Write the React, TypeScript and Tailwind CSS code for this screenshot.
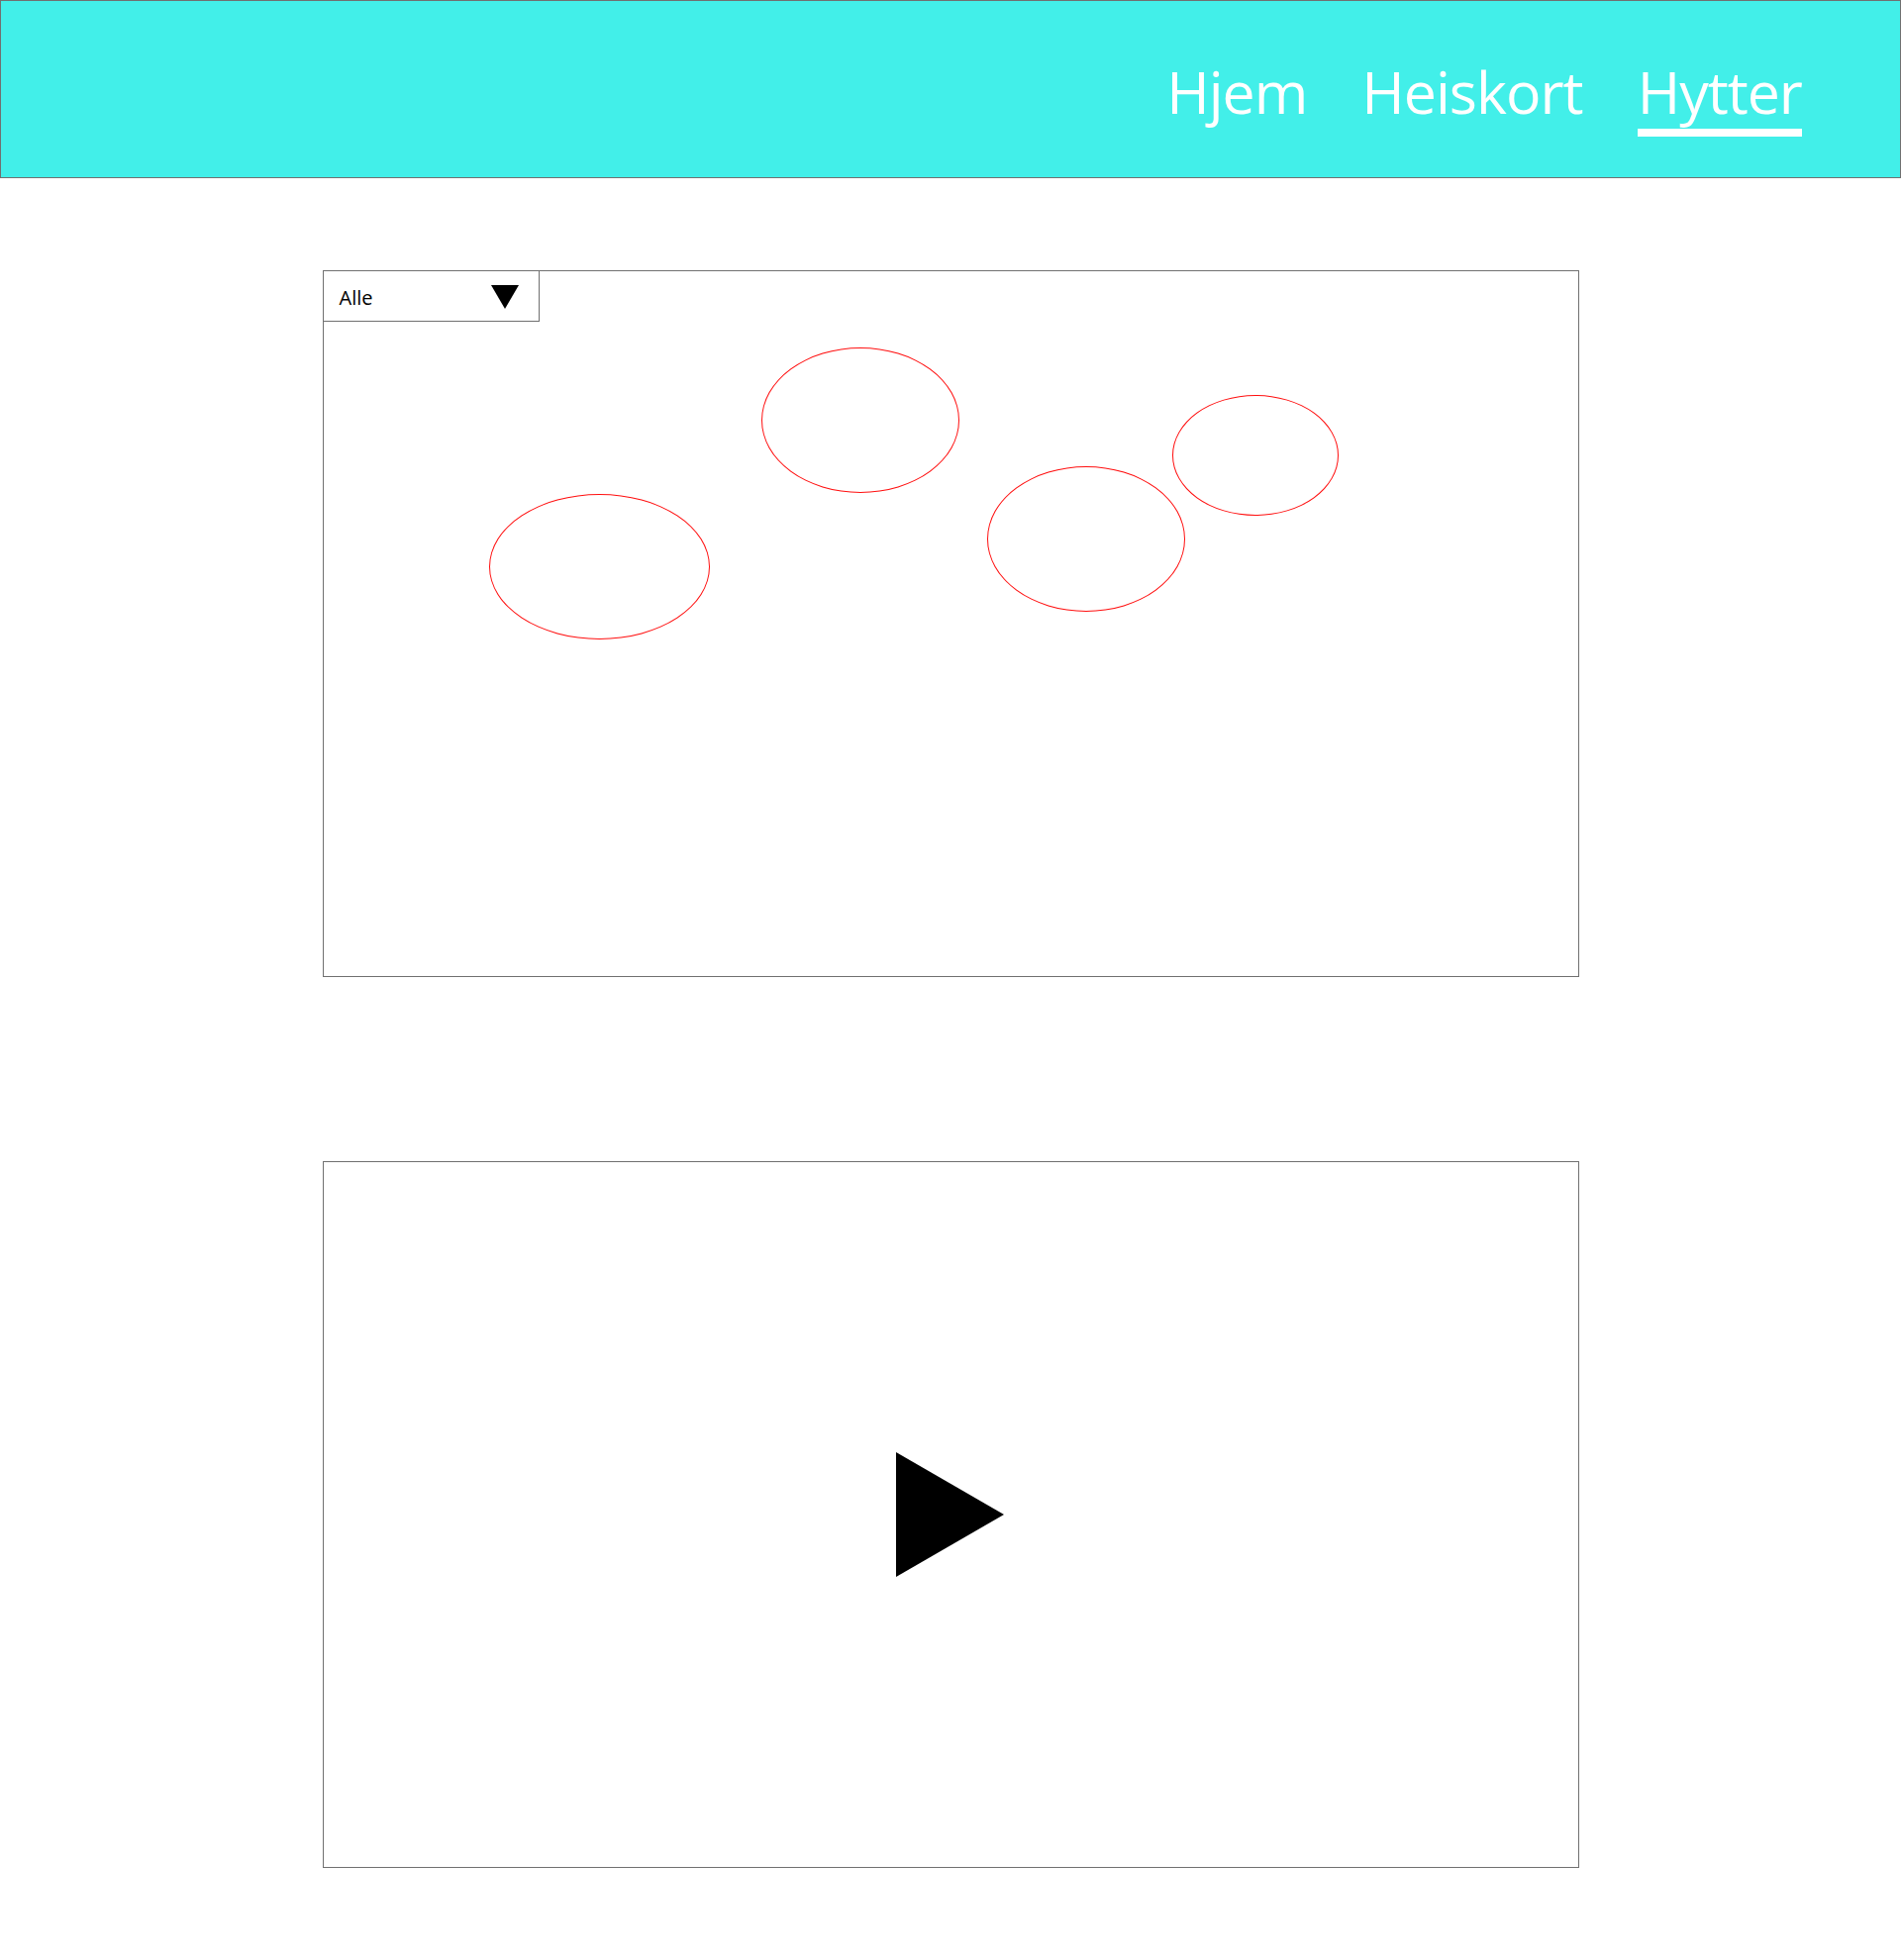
import React from "react";

const navItems = [
  { label: "Hjem", active: false },
  { label: "Heiskort", active: false },
  { label: "Hytter", active: true },
];

// cabin spots on the map, in px from the map's inner top-left corner
const spots = [
  { left: 167, top: 225, w: 223, h: 147 },
  { left: 442, top: 77, w: 200, h: 147 },
  { left: 670, top: 197, w: 200, h: 147 },
  { left: 857, top: 125, w: 168, h: 122 },
];

function Header() {
  return (
    <header className="h-[180px] bg-[#42EFE9] border border-[#707070]">
      <nav className="flex justify-end gap-[55px] pr-[99px] pt-[62px] font-['Open_Sans','Noto_Sans',sans-serif] text-[59px] leading-none tracking-[-1px] text-white">
        {navItems.map((item) => (
          <a
            key={item.label}
            href="#"
            className={
              item.active
                ? "block pb-[8px] border-b-[8px] border-white"
                : "block pb-[8px] border-b-[8px] border-transparent"
            }
          >
            {item.label}
          </a>
        ))}
      </nav>
    </header>
  );
}

function MapPanel() {
  return (
    <section className="relative w-[1269px] h-[714px] mx-auto border border-[#707070] bg-white">
      {/* Filter dropdown */}
      <div className="flex items-center justify-between w-[218px] h-[51px] pl-4 pr-5 border-r border-b border-[#707070] font-['Open_Sans','Noto_Sans',sans-serif] text-[20px] text-black">
        <span className="mt-[3px]">Alle</span>
        <svg width="28" height="24" viewBox="0 0 28 24" className="mt-[2px]">
          <polygon points="0,0 28,0 14,24" fill="#000" />
        </svg>
      </div>

      {spots.map((s, i) => (
        <div
          key={i}
          className="absolute rounded-[50%] border border-[#ff1010]"
          style={{ left: s.left, top: s.top, width: s.w, height: s.h }}
        />
      ))}
    </section>
  );
}

function VideoPanel() {
  return (
    <section className="flex items-center justify-center w-[1269px] h-[714px] mx-auto border border-[#707070] bg-white">
      <svg width="109" height="126" viewBox="0 0 109 126" className="ml-[-2px]">
        <polygon points="0,0 109,63 0,126" fill="#000" />
      </svg>
    </section>
  );
}

export default function App() {
  return (
    <div className="min-h-[1980px] bg-white">
      <Header />
      <main className="pt-[93px] flex flex-col gap-[186px]">
        <MapPanel />
        <VideoPanel />
      </main>
    </div>
  );
}
